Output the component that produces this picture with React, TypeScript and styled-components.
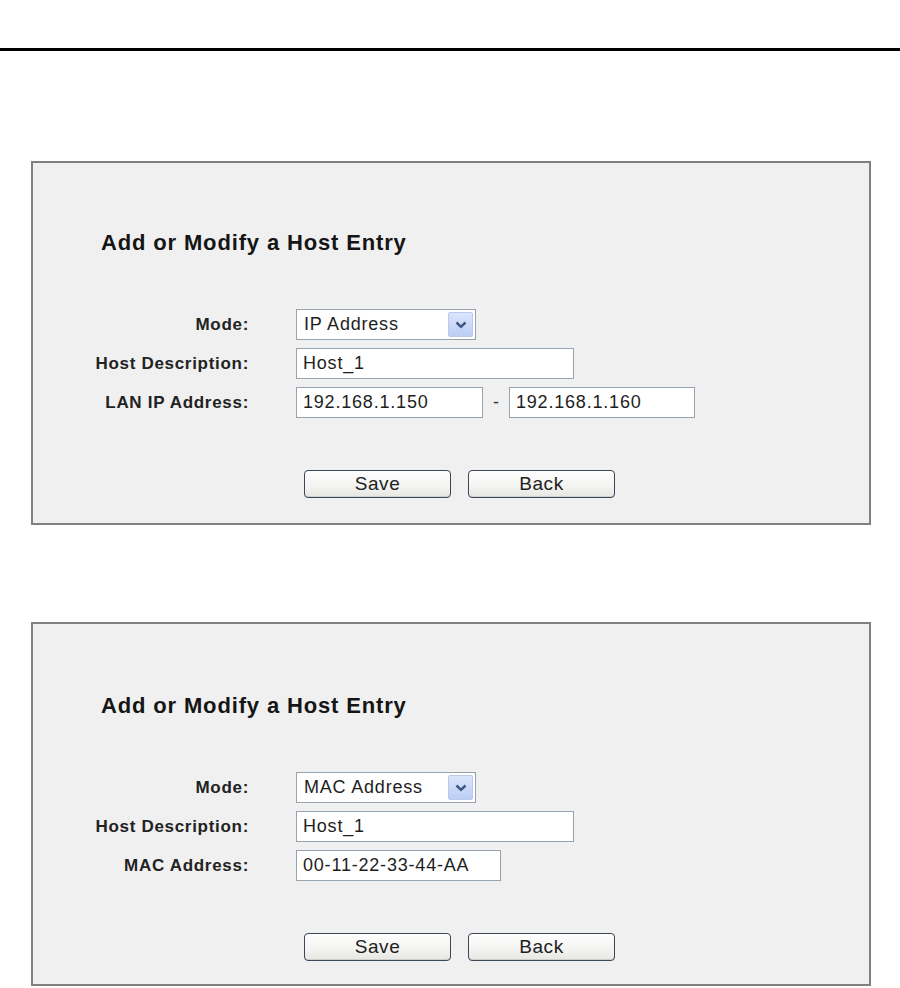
import React from "react";
import styled, { createGlobalStyle } from "styled-components";

const GlobalStyle = createGlobalStyle`
  html, body {
    margin: 0;
    padding: 0;
    background: #ffffff;
  }
  body {
    font-family: "Liberation Sans", Arial, sans-serif;
    color: #1a1a1a;
  }
`;

const Page = styled.div`
  padding-top: 48px;
`;

const Rule = styled.div`
  height: 3px;
  background: #000000;
`;

const Panels = styled.div`
  display: flex;
  flex-direction: column;
  gap: 97px;
  padding: 110px 0 0 31px;
`;

const Panel = styled.section<{ $shift: number }>`
  width: 840px;
  box-sizing: border-box;
  border: 2px solid #808080;
  background: #f0f0f0;
  padding: ${(p) => 68 + p.$shift}px 0 ${(p) => 25 - p.$shift}px 0;
`;

const Title = styled.h2`
  margin: 0 0 0 68px;
  font-size: 22px;
  line-height: 24px;
  font-weight: bold;
  letter-spacing: 0.85px;
  color: #151515;
`;

const Form = styled.div`
  margin-top: 54px;
  display: grid;
  grid-template-columns: 216px auto;
  column-gap: 47px;
  row-gap: 8px;
  align-items: center;
`;

const Label = styled.div`
  text-align: right;
  font-size: 17px;
  font-weight: bold;
  letter-spacing: 0.7px;
  color: #222222;
  white-space: nowrap;
`;

const Field = styled.div`
  display: flex;
  align-items: center;
`;

const TextBox = styled.input<{ $w: number }>`
  width: ${(p) => p.$w}px;
  height: 31px;
  box-sizing: border-box;
  margin: 0;
  border: 1px solid #98a3b2;
  background: #ffffff;
  padding: 0 0 0 6px;
  font-family: "Liberation Sans", Arial, sans-serif;
  font-size: 18px;
  letter-spacing: 0.8px;
  color: #1e1e1e;
  outline: none;
`;

const Select = styled.div`
  width: 180px;
  height: 31px;
  box-sizing: border-box;
  border: 1px solid #98a3b2;
  background: #ffffff;
  display: flex;
  align-items: stretch;
  padding: 2px;
`;

const SelectText = styled.span`
  flex: 1;
  display: flex;
  align-items: center;
  padding-left: 5px;
  font-size: 18px;
  letter-spacing: 0.8px;
  color: #1e1e1e;
`;

const ArrowBox = styled.span`
  width: 25px;
  box-sizing: border-box;
  border: 1px solid #b9c8ec;
  border-radius: 2px;
  background: linear-gradient(#dbe5fc, #bccdf4);
  display: flex;
  align-items: center;
  justify-content: center;
`;

const Dash = styled.span`
  width: 26px;
  text-align: center;
  font-size: 18px;
  color: #333333;
`;

const Buttons = styled.div`
  margin-top: 52px;
  padding-left: 271px;
  display: flex;
  gap: 17px;
`;

const Button = styled.button`
  width: 147px;
  height: 28px;
  box-sizing: border-box;
  margin: 0;
  border: 1px solid #3b4656;
  border-radius: 4px;
  background: linear-gradient(#fefefe, #f3f3f1 60%, #e6e6e2);
  box-shadow: inset 0 -1px 0 #cfcfcf;
  font-family: "Liberation Sans", Arial, sans-serif;
  font-size: 19px;
  letter-spacing: 0.6px;
  color: #222222;
  padding: 0;
`;

const Chevron = () => (
  <svg width="12" height="8" viewBox="0 0 12 8">
    <polyline
      points="1.5,1.5 6,5.8 10.5,1.5"
      fill="none"
      stroke="#3f5584"
      strokeWidth="2.5"
    />
  </svg>
);

type Entry = {
  mode: string;
  addrLabel: string;
  addr: React.ReactNode;
  shift: number;
};

const HostPanel = ({ mode, addrLabel, addr, shift }: Entry) => (
  <Panel $shift={shift}>
    <Title>Add or Modify a Host Entry</Title>
    <Form>
      <Label>Mode:</Label>
      <Field>
        <Select>
          <SelectText>{mode}</SelectText>
          <ArrowBox>
            <Chevron />
          </ArrowBox>
        </Select>
      </Field>
      <Label>Host Description:</Label>
      <Field>
        <TextBox $w={278} readOnly defaultValue="Host_1" />
      </Field>
      <Label>{addrLabel}</Label>
      <Field>{addr}</Field>
    </Form>
    <Buttons>
      <Button>Save</Button>
      <Button>Back</Button>
    </Buttons>
  </Panel>
);

export default function App() {
  return (
    <>
      <GlobalStyle />
      <Page>
        <Rule />
        <Panels>
          <HostPanel
            shift={0}
            mode="IP Address"
            addrLabel="LAN IP Address:"
            addr={
              <>
                <TextBox $w={187} readOnly defaultValue="192.168.1.150" />
                <Dash>-</Dash>
                <TextBox $w={186} readOnly defaultValue="192.168.1.160" />
              </>
            }
          />
          <HostPanel
            shift={2}
            mode="MAC Address"
            addrLabel="MAC Address:"
            addr={<TextBox $w={205} readOnly defaultValue="00-11-22-33-44-AA" />}
          />
        </Panels>
      </Page>
    </>
  );
}
